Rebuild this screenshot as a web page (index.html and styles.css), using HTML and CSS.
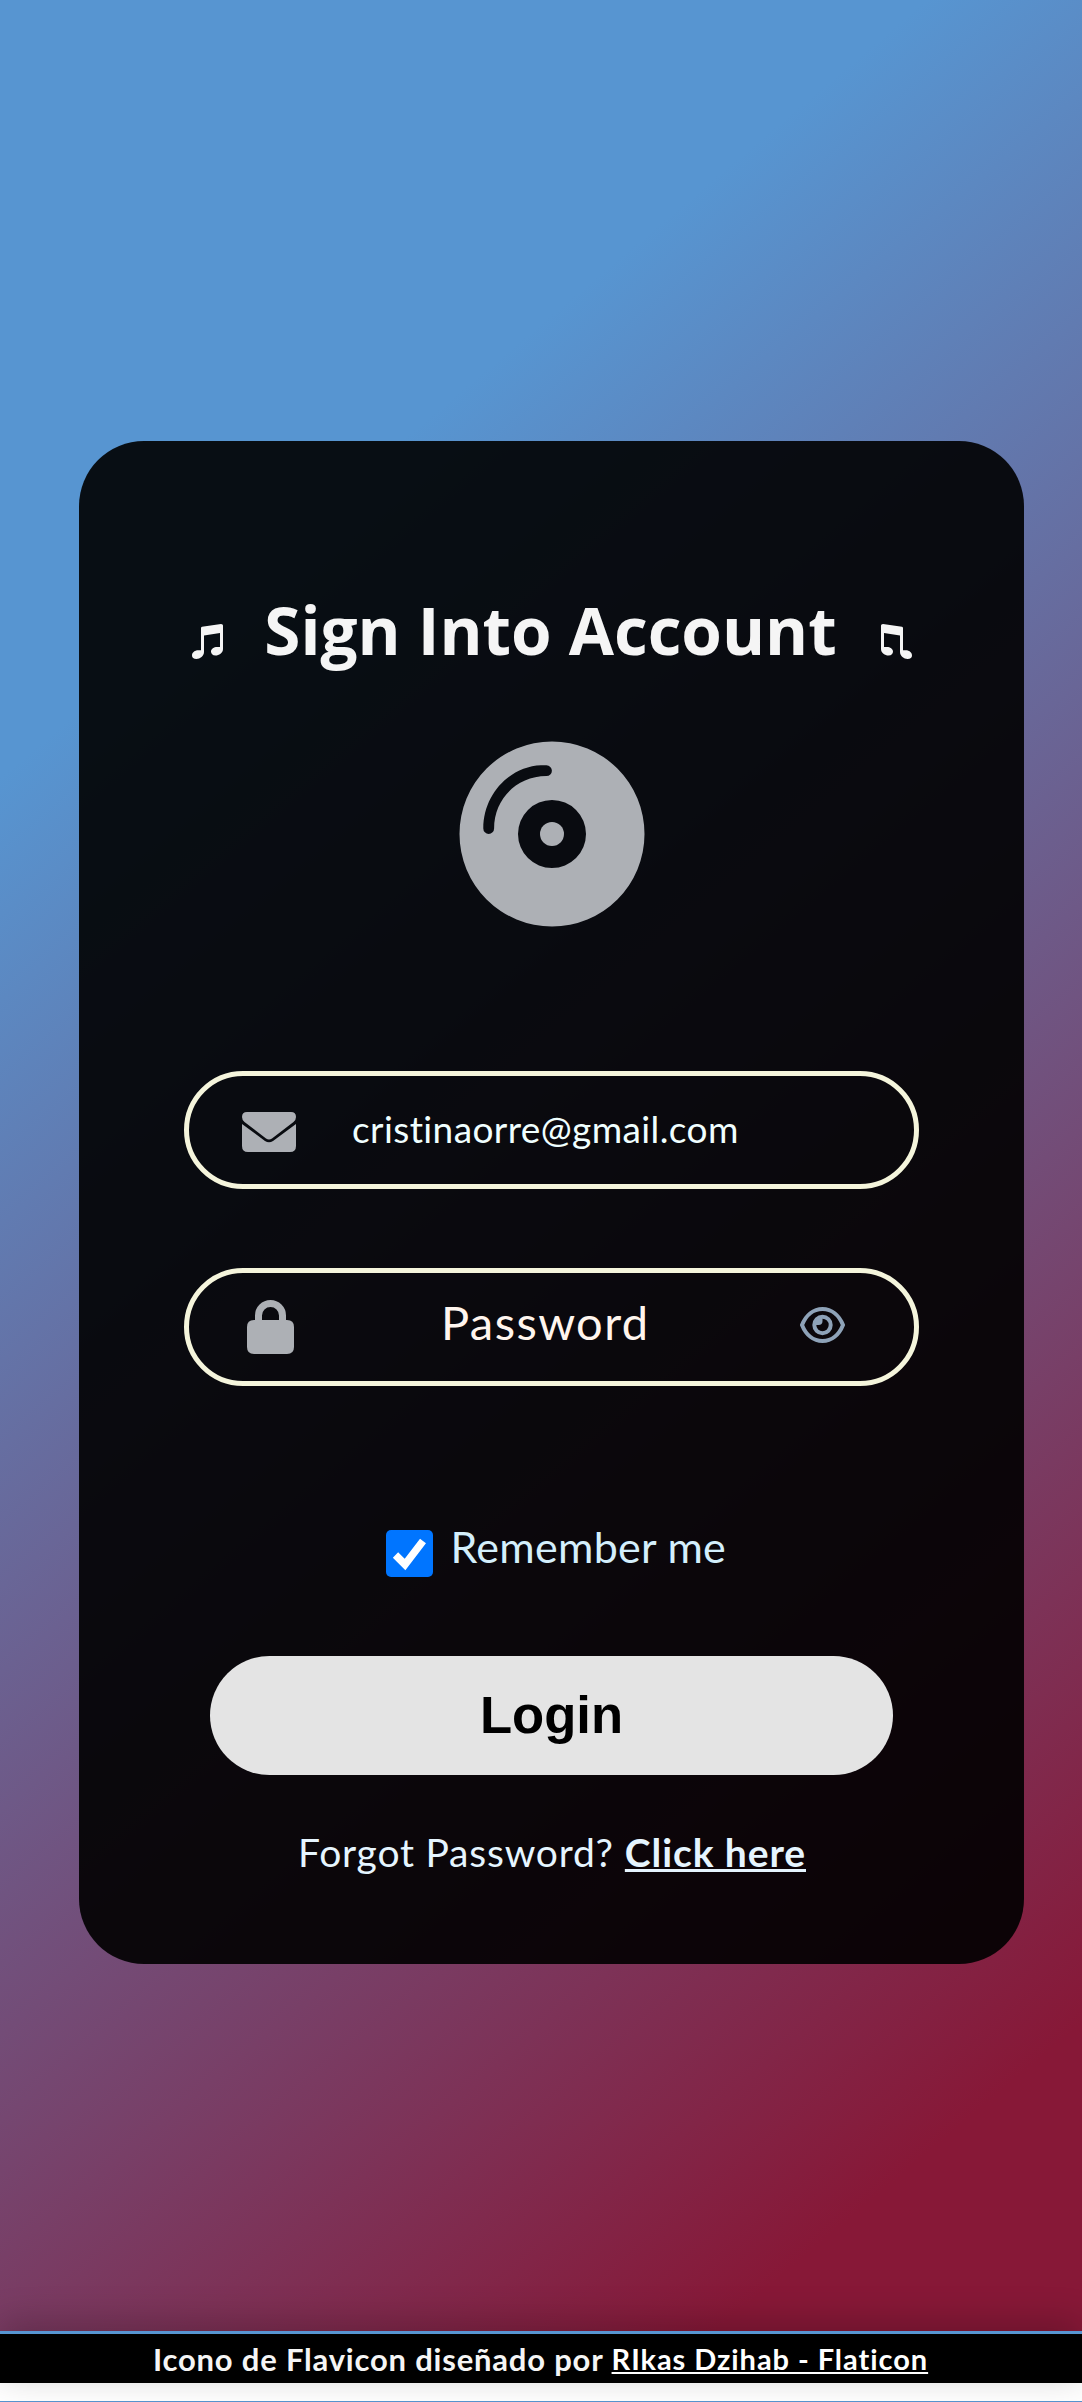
FILE: index.html
```html
<!DOCTYPE html>
<html lang="es">
<head>
<meta charset="utf-8">
<title>Sign In</title>
<link rel="stylesheet" href="styles.css">
</head>
<body>
<main class="page">
  <form class="card">
    <h1 class="title">
      <svg class="note" viewBox="0 0 31 35"><path d="M9 4Q9 3 10 2.800L29 0Q31 0 31 1.500V25C31 29 27 31.500 23.500 31.500C20.500 31.500 19 29.800 19 27.500C19 25 22 23 25 23H28V9L12 11.500V28C12 32 8 35 4.500 35C1.500 35 0 33.500 0 31.500C0 28.500 3 26.300 6 26.300H9Z"/></svg>
      <span class="title-text">Sign Into Account</span>
      <svg class="note note-flipped" viewBox="0 0 31 35"><path d="M9 4Q9 3 10 2.800L29 0Q31 0 31 1.500V25C31 29 27 31.500 23.500 31.500C20.500 31.500 19 29.800 19 27.500C19 25 22 23 25 23H28V9L12 11.500V28C12 32 8 35 4.500 35C1.500 35 0 33.500 0 31.500C0 28.500 3 26.300 6 26.300H9Z"/></svg>
    </h1>
    <svg class="disc" viewBox="0 0 186 186">
      <path fill-rule="evenodd" d="M93 .5a92.500 92.500 0 1 0 0 185a92.500 92.500 0 1 0 0-185zM93 59a34 34 0 1 1 0 68a34 34 0 1 1 0-68zM82 24.300h5.500a5.400 5.400 0 0 1 0 10.800C58 35.100 35.100 58 35.100 87.500a5.400 5.400 0 0 1-10.800 0C24.300 53 51 25.500 82 24.300z"/>
      <circle cx="93" cy="93" r="12"/>
    </svg>
    <div class="field">
      <svg class="mail" viewBox="0 0 54 40"><path d="M5 0H49Q54 0 54 5Q54 8 51.500 10L30 26.500Q27 28.500 24 26.500L2.500 10Q0 8 0 5Q0 0 5 0ZM0 12L23 29Q27 31.500 31 29L54 12V34Q54 40 48 40H6Q0 40 0 34Z"/></svg>
      <span class="email">cristinaorre@gmail.com</span>
    </div>
    <div class="field">
      <svg class="lock" viewBox="0 0 47 54"><path fill-rule="evenodd" d="M8 20V15.500a15.500 15.500 0 0 1 31 0V20h1q7 0 7 7v20q0 7-7 7H7q-7 0-7-7V27q0-7 7-7zM15 20H32V15.500a8.500 8.500 0 0 0-17 0z"/></svg>
      <span class="password">Password</span>
      <svg class="eye" viewBox="0 0 45 36"><path d="M2 18C6 8 13.500 2 22.500 2S39 8 43 18C39 28 31.500 34 22.500 34S6 28 2 18Z"/><circle cx="22.500" cy="18" r="8.200"/><path class="pupil" d="M22.500 9.500V14a4 4 0 0 1-4 4H14a8.500 8.500 0 0 1 8.500-8.500Z"/></svg>
    </div>
    <label class="remember">
      <svg class="check" viewBox="0 0 47 47"><path d="M9.500 25L19 34.500L37 11"/></svg>
      <span class="remember-text">Remember me</span>
    </label>
    <button class="login" type="button">Login</button>
    <p class="forgot"><span class="ask">Forgot Password?</span><a class="reset" href="#">Click here</a></p>
  </form>
</main>
<footer class="footer"><span class="credit">Icono de Flavicon diseñado por</span><a class="author" href="#">RIkas Dzihab - Flaticon</a></footer>
<div class="end"></div>
</body>
</html>
```
FILE: styles.css
```css
* { box-sizing: border-box; }
body {
  margin: 0;
  background: #fff;
  font-family: Lato, "Open Sans", sans-serif;
}
.page {
  height: 2331px;
  padding: 441px 58px 0 79px;
  background: linear-gradient(140deg, #5795d1 24%, #871837 90.5%);
}
.card {
  height: 1523px;
  border-radius: 65px;
  background: rgba(0, 0, 0, .905);
  display: flex;
  flex-direction: column;
  align-items: center;
}
.title {
  margin: 142px 0 0;
  width: 720px;
  height: 100px;
  display: flex;
  justify-content: space-between;
  color: #f5f5f5;
  font: bold 65.6px/100px "Open Sans", sans-serif;
}
.title-text { margin: -3px 0 0 -2px; white-space: nowrap; }
.note { width: 31px; height: 35px; margin-top: 41px; fill: #f5f5f5; }
.note-flipped { transform: scaleX(-1); }
.disc { width: 186px; height: 186px; margin-top: 58px; fill: #adb0b5; }
.field {
  width: 735px;
  height: 118px;
  border: 5px solid #f5f5dc;
  border-radius: 59px;
  display: flex;
  align-items: center;
  color: #f0ffff;
  white-space: nowrap;
}
.field:nth-of-type(1) { margin-top: 144px; }
.field:nth-of-type(2) { margin-top: 79px; }
.mail { width: 54px; height: 40px; margin: 4px 0 0 53px; fill: #adb0b5; }
.email { font-size: 37px; margin: -3px 0 0 56px; letter-spacing: .4px; }
.lock { width: 47px; height: 54px; margin-left: 58px; fill: #adb0b5; }
.password { font-size: 47px; margin: -10px 0 0 147px; width: 210px; color: #fff5ee; letter-spacing: 1.4px; }
.eye { width: 45px; height: 36px; margin: -5px 0 0 149px; fill: none; stroke: #8ea2b8; stroke-width: 4; }
.eye .pupil { fill: #8ea2b8; stroke: none; }
.remember {
  margin: 134px 0 0 9px;
  height: 68px;
  width: 341px;
  display: flex;
  color: #d4effc;
  font-size: 43px;
  line-height: 54px;
  white-space: nowrap;
}
.check { width: 47px; height: 47px; margin: 10px 18px 0 0; border-radius: 5px; background: #0075ff; fill: none; stroke: #fff; stroke-width: 7.5; }
.remember-text { letter-spacing: .3px; }
.login {
  margin-top: 68px;
  width: 683px;
  height: 119px;
  padding: 0 0 2px;
  border: 0;
  border-radius: 60px;
  background: #e4e4e4;
  color: #000;
  font: bold 52.6px "Liberation Sans", Arial, sans-serif;
}
.forgot {
  margin: 49px 0 0 1px;
  width: 508px;
  display: flex;
  justify-content: space-between;
  color: #e6f5ff;
  font-size: 39px;
  line-height: 56px;
  white-space: nowrap;
}
.ask { letter-spacing: .8px; }
.reset { color: #e6f5ff; font-weight: bold; letter-spacing: .9px; }
.footer {
  position: relative;
  height: 52px;
  border-top: 3px solid #5795d1;
  background: #000;
  box-shadow: 0 -8px 36px rgba(0, 0, 0, .22);
  display: flex;
  align-items: center;
  padding-left: 153px;
  color: #f5f5f5;
  font-size: 31px;
  font-weight: bold;
  white-space: nowrap;
}
.credit { letter-spacing: .8px; }
.author { color: #fff; font-size: 29px; margin-left: 8px; letter-spacing: .95px; }
.end { height: 19px; border-bottom: 1px solid #5795d1; }
```
